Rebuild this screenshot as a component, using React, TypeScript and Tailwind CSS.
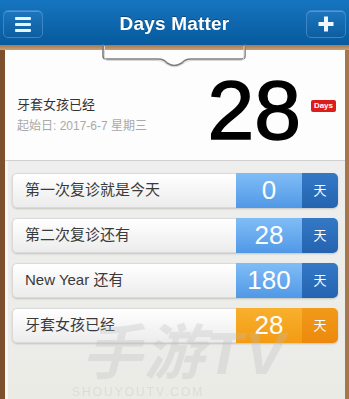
import React from "react";

type Row = { title: string; days: string; tone: "blue" | "orange" };

const rows: Row[] = [
  { title: "第一次复诊就是今天", days: "0", tone: "blue" },
  { title: "第二次复诊还有", days: "28", tone: "blue" },
  { title: "New Year 还有", days: "180", tone: "blue" },
  { title: "牙套女孩已经", days: "28", tone: "orange" },
];

const font = { fontFamily: '"Liberation Sans", Arial, "Noto Sans CJK SC", sans-serif' };

function Clip() {
  return (
    <svg className="absolute left-[100px] top-[44px]" width="150" height="26" viewBox="0 0 150 26" fill="none">
      <path
        d="M3 1 V12 Q3 15 6 15 H58 Q64 15 67 19 Q74 24 82 19 Q85 15 91 15 H142 Q145 15 145 12 V1"
        stroke="#7d7d7d"
        strokeWidth="1.6"
        strokeLinecap="round"
      />
      <path
        d="M4.5 2 V11.5 Q4.5 16.5 8 16.5 H58 Q63 16.5 67 20.5 Q74 25 82 20.5 Q86 16.5 91 16.5 H141 Q144 16.5 144 11.5 V2"
        stroke="#d6d6d6"
        strokeWidth="1"
      />
    </svg>
  );
}

function HeaderButton({ children }: { children: React.ReactNode }) {
  return (
    <div className="w-[40px] h-[28px] rounded-[5px] border border-[#3b86c8] bg-gradient-to-b from-[#1b76bf] to-[#0d5e9f] shadow-[inset_0_1px_0_rgba(255,255,255,0.25)] flex items-center justify-center">
      {children}
    </div>
  );
}

export default function App() {
  return (
    <div className="w-[349px] h-[399px] overflow-hidden flex flex-col relative bg-[#8b5a33]" style={font}>
      <header className="h-[45px] bg-gradient-to-b from-[#1675c0] to-[#075a9d] flex items-center justify-between px-[3px] pt-[3px]">
        <HeaderButton>
          <div className="flex flex-col gap-[3px]">
            <span className="block w-[16px] h-[3px] bg-[#e8f3fb] rounded-[1px]" />
            <span className="block w-[16px] h-[3px] bg-[#e8f3fb] rounded-[1px]" />
            <span className="block w-[16px] h-[3px] bg-[#e8f3fb] rounded-[1px]" />
          </div>
        </HeaderButton>
        <h1 className="text-white text-[19px] font-bold tracking-[0.2px] drop-shadow-[0_-1px_0_rgba(0,0,0,0.3)]">Days Matter</h1>
        <HeaderButton>
          <svg width="16" height="16" viewBox="0 0 16 16">
            <rect x="6" y="0.5" width="4" height="15" fill="#f2f7fb" />
            <rect x="0.5" y="6" width="15" height="4" fill="#f2f7fb" />
          </svg>
        </HeaderButton>
      </header>

      <div className="h-[5px] bg-gradient-to-b from-[#a8784a] to-[#c7a07a]" />

      <div className="flex-1 flex flex-col pl-[5px] pr-[4px] bg-gradient-to-r from-[#7d4f2c] via-[#b38a62] to-[#a5774d]">
        <section className="h-[111px] bg-[#fdfdfd] border-b border-[#cfcfcf] flex items-center pl-[12px] pr-[9px] pt-[10px]">
          <div className="flex-1 pt-[10px]">
            <p className="text-[13px] text-[#333] leading-none">牙套女孩已经</p>
            <p className="text-[12px] text-[#a9a9a9] mt-[9px] leading-none">起始日: 2017-6-7 星期三</p>
          </div>
          <span className="text-[84px] leading-none text-black mr-[10px] [-webkit-text-stroke:1.5px_black]">28</span>
          <span className="bg-[#dd1c1c] text-white text-[8px] font-bold rounded-[2px] px-[3px] py-[2px] leading-none mb-[8px]">
            Days
          </span>
        </section>

        <div className="flex-1 bg-gradient-to-b from-[#eeeeee] to-[#ebebe6] border-l-[3px] border-[#f7f7f7] pl-[4px] pr-[7px] pt-[12px] flex flex-col gap-[10px]">
          {rows.map((r) => (
            <div key={r.title} className="h-[35px] flex shadow-[0_1px_2px_rgba(0,0,0,0.18)] rounded-[5px]">
              <div className="flex-1 flex items-center pl-[12px] rounded-l-[5px] bg-gradient-to-b from-[#ffffff] to-[#ececec] border border-r-0 border-[#dadada]">
                <span className="text-[15px] text-[#3a3a3a]">{r.title}</span>
              </div>
              <div
                className={`w-[66px] flex items-center justify-center text-white text-[26px] ${
                  r.tone === "blue"
                    ? "bg-gradient-to-b from-[#80bdf6] to-[#5098e6]"
                    : "bg-gradient-to-b from-[#f8b02c] to-[#f39b12]"
                }`}
              >
                {r.days}
              </div>
              <div
                className={`w-[36px] rounded-r-[5px] flex items-center justify-center text-white text-[13px] ${
                  r.tone === "blue" ? "bg-gradient-to-b from-[#3479c6] to-[#2463b0]" : "bg-gradient-to-b from-[#f29a1a] to-[#ec890c]"
                }`}
              >
                天
              </div>
            </div>
          ))}
        </div>
      </div>

      <Clip />

      <div className="absolute left-[82px] top-[324px] pointer-events-none select-none text-[60px] font-bold italic leading-none text-[#bdbdbd] opacity-30 tracking-[2px]">
        手游TV
      </div>
      <div className="absolute left-[72px] top-[386px] pointer-events-none select-none text-[12px] leading-none text-[#c4c4c4] opacity-40 tracking-[2px]">
        SHOUYOUTV.COM
      </div>
    </div>
  );
}
